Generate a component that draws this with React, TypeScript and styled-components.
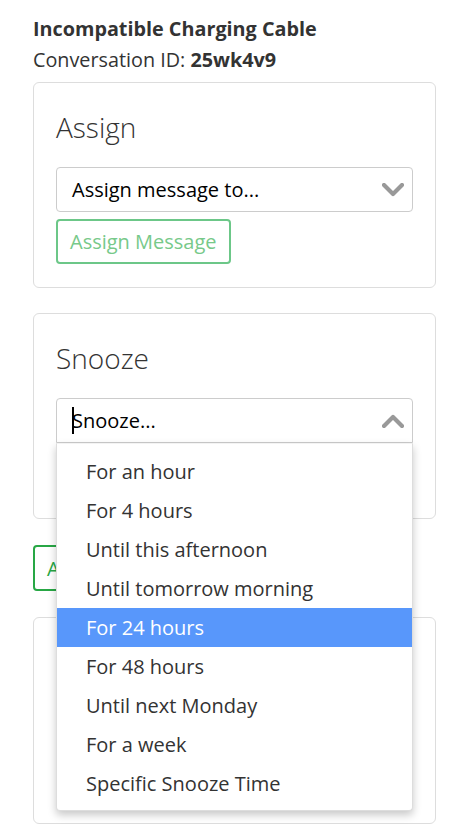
import React from "react";
import styled, { createGlobalStyle } from "styled-components";

const Global = createGlobalStyle`
  html, body { margin: 0; padding: 0; background: #fff; }
  body { font-family: "Open Sans", "Noto Sans", sans-serif; color: #333; }
  * { box-sizing: border-box; }
`;

const Page = styled.div`
  padding: 15px 19px 15px 33px;
  display: flex;
  flex-direction: column;
`;

const Title = styled.div`
  font-size: 19.8px;
  font-weight: 700;
  line-height: 28px;
  color: #333;
`;

const Meta = styled.div`
  font-size: 19.8px;
  line-height: 28px;
  margin-top: 3px;
  color: #333;
  b { font-weight: 700; }
`;

const Card = styled.div<{ $minH?: number }>`
  border: 1px solid #ddd;
  border-radius: 6px;
  padding: 24px 22px 23px;
  display: flex;
  flex-direction: column;
  min-height: ${(p) => (p.$minH ? `${p.$minH}px` : "auto")};
`;

const Stack = styled.div`
  display: flex;
  flex-direction: column;
  margin-top: 8px;
`;

const Gap = styled.div<{ $h: number }>`
  height: ${(p) => p.$h}px;
  flex: none;
`;

const Heading = styled.div`
  font-size: 28px;
  font-weight: 300;
  line-height: 40px;
  color: #333;
`;

const SelectWrap = styled.div`
  position: relative;
  margin-top: 20px;
`;

const SelectBox = styled.div<{ $open?: boolean }>`
  height: 45px;
  border: 1px solid #ccc;
  border-radius: ${(p) => (p.$open ? "4px 4px 0 0" : "4px")};
  display: flex;
  align-items: center;
  padding: 0 8px 0 15px;
  font-size: 20px;
  color: #000;
  background: #fff;
`;

const Caret = styled.span`
  display: inline-block;
  width: 2px;
  height: 27px;
  background: #000;
  margin-right: -2px;
`;

const SelectText = styled.span`
  flex: 1;
  display: flex;
  align-items: center;
`;

const Button = styled.button<{ $strong?: boolean; $covered?: boolean }>`
  align-self: flex-start;
  height: ${(p) => (p.$strong ? "46px" : "45px")};
  margin-top: ${(p) => (p.$strong ? "0" : "7px")};
  padding: 0 12px;
  border: 2px solid ${(p) => (p.$strong ? "#28a745" : "#6cc788")};
  border-radius: 4px;
  background: #fff;
  color: ${(p) => (p.$strong ? "#28a745" : "#77c98a")};
  font-family: inherit;
  font-size: 20px;
  visibility: ${(p) => (p.$covered ? "hidden" : "visible")};
`;

const Menu = styled.ul`
  position: absolute;
  top: 100%;
  left: 0;
  right: 0;
  margin: 0;
  padding: 8px 0 7px;
  list-style: none;
  background: #fff;
  border: 1px solid #ddd;
  border-top: 1px solid #f3f3f3;
  border-radius: 0 0 4px 4px;
  box-shadow: 0 4px 8px rgba(0, 0, 0, 0.22);
  z-index: 10;
`;

const Item = styled.li<{ $active?: boolean }>`
  height: 39px;
  line-height: 39px;
  padding-left: 29px;
  font-size: 20px;
  color: ${(p) => (p.$active ? "#fff" : "#333")};
  background: ${(p) => (p.$active ? "#5897fb" : "transparent")};
`;

const Chevron = ({ up }: { up?: boolean }) => (
  <svg width="22" height="14" viewBox="0 0 22 14">
    <polyline
      points={up ? "2,12 11,3 20,12" : "2,2 11,11 20,2"}
      fill="none"
      stroke="#999"
      strokeWidth="4.2"
      strokeLinecap="round"
      strokeLinejoin="round"
    />
  </svg>
);

const options = [
  "For an hour",
  "For 4 hours",
  "Until this afternoon",
  "Until tomorrow morning",
  "For 24 hours",
  "For 48 hours",
  "Until next Monday",
  "For a week",
  "Specific Snooze Time",
];

export default function App() {
  return (
    <>
      <Global />
      <Page>
        <Title>Incompatible Charging Cable</Title>
        <Meta>
          Conversation ID: <b>25wk4v9</b>
        </Meta>
        <Stack>
          <Card>
            <Heading>Assign</Heading>
            <SelectWrap>
              <SelectBox>
                <SelectText>Assign message to...</SelectText>
                <Chevron />
              </SelectBox>
            </SelectWrap>
            <Button>Assign Message</Button>
          </Card>
          <Gap $h={25} />
          <Card>
            <Heading>Snooze</Heading>
            <SelectWrap>
              <SelectBox $open>
                <SelectText>
                  <Caret />
                  Snooze...
                </SelectText>
                <Chevron up />
              </SelectBox>
              <Menu>
                {options.map((o) => (
                  <Item key={o} $active={o === "For 24 hours"}>
                    {o}
                  </Item>
                ))}
              </Menu>
            </SelectWrap>
            <Button $covered>Snooze Message</Button>
          </Card>
          <Gap $h={26} />
          <Button $strong>Archive Conversation</Button>
          <Gap $h={26} />
          <Card $minH={207} />
        </Stack>
      </Page>
    </>
  );
}
